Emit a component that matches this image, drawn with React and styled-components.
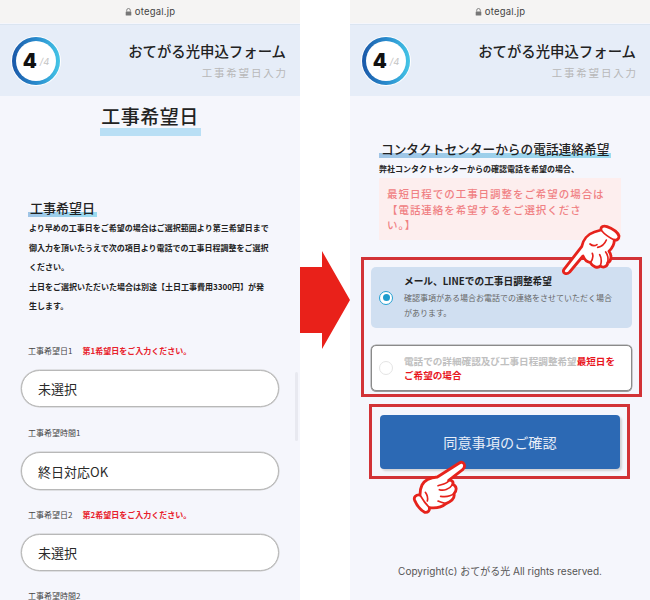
import React from "react";
import styled, { createGlobalStyle } from "styled-components";

const Global = createGlobalStyle`
  html, body { margin: 0; padding: 0; background: #fff; }
  body { font-family: "Noto Sans CJK JP", "Liberation Sans", sans-serif; color: #222; }
  * { box-sizing: border-box; }
`;

const Page = styled.div`
  width: 650px;
  height: 600px;
  display: flex;
  overflow: hidden;
  background: #fff;
`;
const Phone = styled.div`
  position: relative;
  width: 300px;
  height: 600px;
  flex: none;
  display: flex;
  flex-direction: column;
  overflow: hidden;
  background: #f5f6fc;
`;
const Gutter = styled.div`
  width: 50px;
  flex: none;
  display: flex;
  align-items: center;
`;
const UrlBar = styled.div`
  height: 23px;
  flex: none;
  background: #f5f4f3;
  display: flex;
  align-items: center;
  justify-content: center;
  gap: 3px;
  font-size: 9.5px;
  letter-spacing: 0.2px;
  color: #444;
  font-family: Inter, "Liberation Sans", sans-serif;
  margin-bottom: 1px;
`;
const Header = styled.header`
  height: 72px;
  flex: none;
  background: #e6edf8;
  border-top: 1px solid #dbe5f1;
  display: flex;
  align-items: center;
  justify-content: space-between;
  padding: 0 14px 0 12px;
`;
const Ring = styled.div`
  width: 48px;
  height: 48px;
  border-radius: 50%;
  padding: 4px;
  background: linear-gradient(90deg, #1b58a8 0%, #2a8fd0 55%, #45c6e6 100%);
  box-shadow: 0 0 0 1px #fff;
`;
const RingInner = styled.div`
  width: 100%;
  height: 100%;
  border-radius: 50%;
  background: #fff;
  display: flex;
  align-items: center;
  justify-content: center;
  gap: 3px;
  font-family: Inter, "Liberation Sans", sans-serif;
`;
const StepNow = styled.span`
  font-size: 20px;
  font-weight: 900;
  color: #111;
  line-height: 1;
`;
const StepAll = styled.span`
  font-size: 9.5px;
  font-style: italic;
  color: #c4c4c4;
  line-height: 1;
  padding-top: 2px;
`;
const HeaderText = styled.div`
  display: flex;
  flex-direction: column;
  align-items: flex-end;
  gap: 5px;
`;
const FormTitle = styled.div`
  font-size: 14.4px;
  line-height: 20px;
  font-weight: 500;
  color: #222;
  white-space: nowrap;
`;
const FormSub = styled.div`
  font-size: 10.5px;
  line-height: 14px;
  letter-spacing: 1.8px;
  margin-right: -1.8px;
  color: #b8b8b8;
`;
const Main = styled.main`
  flex: 1;
  display: flex;
  flex-direction: column;
  min-height: 0;
`;
const PageTitle = styled.h1`
  align-self: center;
  margin: 8px 0 0;
  width: 101px;
  text-align: center;
  font-size: 19px;
  line-height: 24px;
  font-weight: 500;
  letter-spacing: 0.5px;
  padding-bottom: 8px;
  background: linear-gradient(#b9dff5, #b9dff5) bottom / 100% 8px no-repeat;
`;
const SectionTitle = styled.h2`
  align-self: flex-start;
  margin: ${(p) => p.$top}px 0 0 ${(p) => p.$left}px;
  font-size: ${(p) => p.$size}px;
  line-height: 18px;
  font-weight: 500;
  padding: 0 2px;
  white-space: nowrap;
  background: linear-gradient(90deg, #9fc4e6, #9adcf0) bottom / 100% 5px no-repeat;
`;
const Para = styled.p`
  margin: 1px 0 0 29px;
  width: 241px;
  font-size: 8px;
  line-height: 19.6px;
  font-weight: 700;
  color: #222;
`;
const LabelRow = styled.div`
  margin: ${(p) => p.$top}px 0 13px 28px;
  display: flex;
  gap: 10px;
  font-size: 8px;
  line-height: 12px;
  color: #444;
  white-space: nowrap;
`;
const Warn = styled.span`
  color: #e8202a;
  font-weight: 700;
`;
const Field = styled.div`
  flex: none;
  margin-left: 21px;
  width: 258px;
  height: 37.5px;
  border-radius: 19px;
  border: 1px solid #b8b8b8;
  box-shadow: 0 0 0 0.5px #c8c8c8;
  background: #fff;
  display: flex;
  align-items: center;
  padding-left: 16px;
  font-size: 13px;
  color: #2a2a2a;
`;
const Scrollbar = styled.div`
  position: absolute;
  left: 295px;
  top: 372px;
  width: 3px;
  height: 69px;
  border-radius: 2px;
  background: #e8e9f0;
`;
const Lead = styled.p`
  margin: 5px 0 0 29px;
  font-size: 8px;
  line-height: 12px;
  font-weight: 700;
  white-space: nowrap;
`;
const Notice = styled.div`
  margin: 3px 0 0 29px;
  width: 242px;
  height: 62px;
  background: #fdeeee;
  padding: 8px 0 0 8px;
  font-size: 10.5px;
  line-height: 15.5px;
  letter-spacing: 0.95px;
  font-weight: 500;
  color: #f08083;
  white-space: nowrap;
`;
const Frame = styled.div`
  border: 3px solid #d23236;
  flex: none;
`;
const OptionFrame = styled(Frame)`
  margin: 17px 8px 0 11px;
  height: 140px;
  padding: 7px 7px 0;
  display: flex;
  flex-direction: column;
  gap: 17px;
`;
const ButtonFrame = styled(Frame)`
  margin: 7px 20px 0 19px;
  height: 75px;
  padding: 8px 8px 0;
`;
const Option = styled.div`
  height: ${(p) => (p.$on ? 61 : 46)}px;
  border-radius: 5px;
  display: flex;
  align-items: center;
  padding-left: ${(p) => (p.$on ? 8 : 7)}px;
  gap: 11px;
  background: ${(p) => (p.$on ? "#d0dff1" : "#fff")};
  border: ${(p) => (p.$on ? "none" : "1px solid #8a8a8a")};
  box-shadow: ${(p) => (p.$on ? "none" : "0 1px 0 #9a9a9a, 0 0 0 0.5px #a0a0a0")};
`;
const Radio = styled.span`
  flex: none;
  width: 14px;
  height: 14px;
  border-radius: 50%;
  background: #fff;
  border: 1.5px solid ${(p) => (p.$on ? "#25a0d2" : "#e4e4e4")};
  display: flex;
  align-items: center;
  justify-content: center;
  &::after {
    content: "";
    width: 7px;
    height: 7px;
    border-radius: 50%;
    background: ${(p) => (p.$on ? "#1f9ccd" : "transparent")};
  }
`;
const OptionBody = styled.div`
  display: flex;
  flex-direction: column;
  padding-bottom: 2px;
`;
const OptionTitle = styled.div`
  font-size: 9.7px;
  line-height: 14px;
  font-weight: 700;
  color: #222;
  margin-bottom: 2px;
  white-space: nowrap;
`;
const OptionDesc = styled.div`
  font-size: 8px;
  line-height: 15px;
  color: #666;
  white-space: nowrap;
`;
const OptionGhost = styled.div`
  font-size: 9.6px;
  line-height: 14.5px;
  font-weight: 700;
  color: #c0c0c0;
  white-space: nowrap;
`;
const Strong = styled.span`
  color: #e8161e;
`;
const Submit = styled.button`
  display: block;
  width: 240px;
  height: 54px;
  border: none;
  border-radius: 4px;
  background: #2c69b4;
  box-shadow: 2px 2px 2px #d2d2d6;
  color: #e8eef8;
  font-family: inherit;
  font-size: 14.2px;
  padding: 0;
`;
const Copyright = styled.footer`
  margin-top: auto;
  padding-bottom: 22px;
  text-align: center;
  font-size: 10px;
  line-height: 14px;
  color: #555;
  font-family: Inter, "Noto Sans CJK JP", sans-serif;
  white-space: nowrap;
`;
const HandSvg = styled.svg`
  position: absolute;
  left: ${(p) => p.$x}px;
  top: ${(p) => p.$y}px;
  width: ${(p) => p.$w}px;
  height: ${(p) => p.$h}px;
  overflow: visible;
`;

function Lock() {
  return (
    <svg width="7" height="8" viewBox="0 0 7 8">
      <path d="M1.7 3.5V2.3a1.8 1.8 0 0 1 3.6 0v1.2" fill="none" stroke="#777" strokeWidth="0.9" />
      <rect x="0.7" y="3.4" width="5.6" height="4.2" rx="0.7" fill="#777" />
    </svg>
  );
}

function Top() {
  return (
    <>
      <UrlBar>
        <Lock />
        otegal.jp
      </UrlBar>
      <Header>
        <Ring>
          <RingInner>
            <StepNow>4</StepNow>
            <StepAll>/4</StepAll>
          </RingInner>
        </Ring>
        <HeaderText>
          <FormTitle>おてがる光申込フォーム</FormTitle>
          <FormSub>工事希望日入力</FormSub>
        </HeaderText>
      </Header>
    </>
  );
}

function HandDown() {
  return (
    <HandSvg $x={205} $y={220} $w={70} $h={60} viewBox="0 0 210 180">
      <path
        d="M27 148 L80 80 C84 60 98 42 118 36 L138 30 C136 20 146 16 156 20 C172 26 188 36 192 48 C192 58 184 62 178 60 C178 74 170 86 162 94 C172 106 168 126 158 128 C158 138 146 146 136 138 C128 146 112 140 106 128 C96 126 88 118 84 108 L44 156 C34 166 20 158 27 148 Z"
        fill="#fff"
        stroke="#e6231c"
        strokeWidth="8.5"
        strokeLinejoin="round"
      />
      <path
        d="M140 32 C150 44 166 54 178 60 M128 82 C140 80 150 70 154 60 M105 72 C112 78 120 78 126 74 M112 100 C116 110 112 120 106 128 M134 104 C140 114 140 126 136 138 M152 96 C158 104 160 118 158 128"
        fill="none"
        stroke="#e6231c"
        strokeWidth="5"
        strokeLinecap="round"
      />
    </HandSvg>
  );
}

function HandUp() {
  return (
    <HandSvg $x={60} $y={455} $w={70} $h={65} viewBox="0 0 210 195">
      <path
        d="M148 24 L82 66 C62 68 44 74 36 90 C30 102 30 112 30 120 C18 118 10 126 14 136 C20 150 30 164 44 172 C54 174 60 166 58 158 C74 160 94 158 108 146 C122 140 136 132 132 116 C142 106 140 92 128 88 C132 80 124 74 116 76 L158 44 C170 32 160 16 148 24 Z"
        fill="#fff"
        stroke="#e6231c"
        strokeWidth="8.5"
        strokeLinejoin="round"
      />
      <path
        d="M30 120 C38 134 48 148 58 158 M46 112 C52 120 54 130 52 138 M84 92 C96 88 108 88 116 78 M88 104 C100 108 118 104 128 88 M92 124 C106 126 122 124 132 116 M84 138 C92 142 100 144 108 146"
        fill="none"
        stroke="#e6231c"
        strokeWidth="5"
        strokeLinecap="round"
      />
    </HandSvg>
  );
}

function LeftPhone() {
  return (
    <Phone>
      <Top />
      <Main>
        <PageTitle>工事希望日</PageTitle>
        <SectionTitle $top={63} $left={28} $size={13}>工事希望日</SectionTitle>
        <Para>
          より早めの工事日をご希望の場合はご選択範囲より第三希望日まで御入力を頂いたうえで次の項目より電話での工事日程調整をご選択ください。
          <br />
          土日をご選択いただいた場合は別途【土日工事費用3300円】が発生します。
        </Para>
        <LabelRow $top={29}>工事希望日1<Warn>第1希望日をご入力ください。</Warn></LabelRow>
        <Field>未選択</Field>
        <LabelRow $top={20}>工事希望時間1</LabelRow>
        <Field>終日対応OK</Field>
        <LabelRow $top={19}>工事希望日2<Warn>第2希望日をご入力ください。</Warn></LabelRow>
        <Field>未選択</Field>
        <LabelRow $top={19}>工事希望時間2</LabelRow>
      </Main>
      <Scrollbar />
    </Phone>
  );
}

function RightPhone() {
  return (
    <Phone>
      <Top />
      <Main>
        <SectionTitle $top={44} $left={29} $size={12.7}>コンタクトセンターからの電話連絡希望</SectionTitle>
        <Lead>弊社コンタクトセンターからの確認電話を希望の場合、</Lead>
        <Notice>
          最短日程での工事日調整をご希望の場合は
          <br />
          【電話連絡を希望するをご選択くださ
          <br />
          い。】
        </Notice>
        <OptionFrame>
          <Option $on>
            <Radio $on />
            <OptionBody>
              <OptionTitle>メール、LINEでの工事日調整希望</OptionTitle>
              <OptionDesc>
                確認事項がある場合お電話での連絡をさせていただく場合
                <br />
                があります。
              </OptionDesc>
            </OptionBody>
          </Option>
          <Option>
            <Radio />
            <OptionGhost>
              電話での詳細確認及び工事日程調整希望<Strong>最短日を</Strong>
              <br />
              <Strong>ご希望の場合</Strong>
            </OptionGhost>
          </Option>
        </OptionFrame>
        <ButtonFrame>
          <Submit>同意事項のご確認</Submit>
        </ButtonFrame>
        <Copyright>Copyright(c) おてがる光 All rights reserved.</Copyright>
      </Main>
      <HandDown />
      <HandUp />
    </Phone>
  );
}

export default function App() {
  return (
    <>
      <Global />
      <Page>
        <LeftPhone />
        <Gutter>
          <svg width="50" height="98" viewBox="0 0 50 98">
            <polygon points="0,16 22,16 22,0 50,49 22,98 22,82 0,82" fill="#e9211a" />
          </svg>
        </Gutter>
        <RightPhone />
      </Page>
    </>
  );
}
